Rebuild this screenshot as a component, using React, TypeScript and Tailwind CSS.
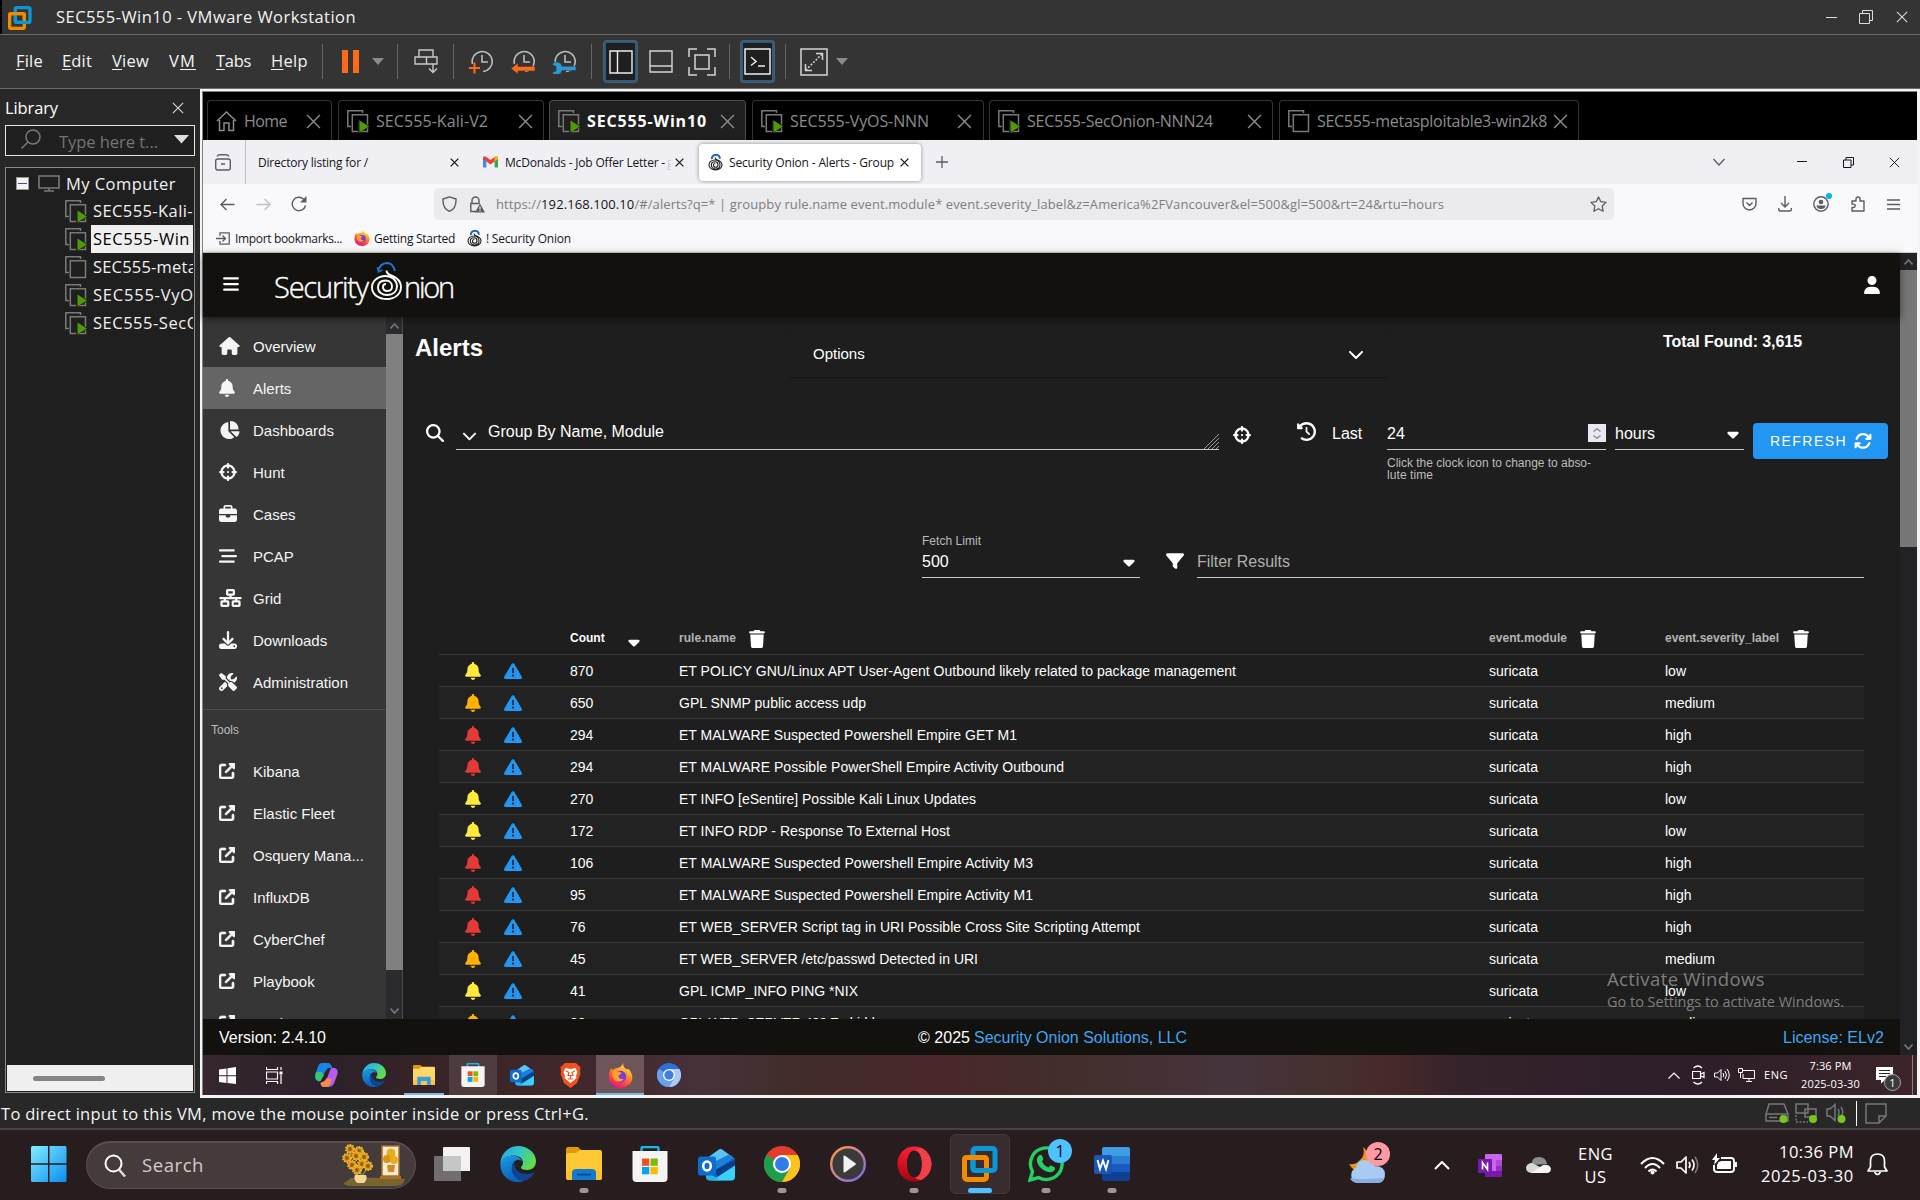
import React, { useLayoutEffect, useRef } from "react";
import {
  FaArrowsRotate, FaBars, FaBarsStaggered, FaBell, FaBriefcase, FaCaretDown, FaChartPie, FaChevronDown,
  FaClockRotateLeft, FaCrosshairs, FaDownload, FaFilter, FaHouse, FaMagnifyingGlass, FaNetworkWired,
  FaScrewdriverWrench, FaTrash, FaTriangleExclamation, FaUpRightFromSquare, FaUser,
} from "react-icons/fa6";

/* A single-line label whose letter spacing is adjusted so that it fills exactly `w` pixels. */
function Label({ w, className = "", children }: { w: number; className?: string; children: React.ReactNode }) {
  const ref = useRef<HTMLSpanElement>(null);
  useLayoutEffect(() => {
    const el = ref.current;
    if (!el) return;
    el.style.letterSpacing = "0px";
    const natural = el.getBoundingClientRect().width;
    const n = (el.textContent || "").length;
    if (n > 1) el.style.letterSpacing = `${(w - natural) / n}px`;
  }, [w]);
  return (
    <span className={"block shrink-0 whitespace-pre " + className} style={{ width: w }}>
      <span ref={ref} className="inline-block whitespace-pre">{children}</span>
    </span>
  );
}

type SvgProps = { w: number; h: number; vb?: string; className?: string; children: React.ReactNode };
function Svg({ w, h, vb, className = "", children }: SvgProps) {
  return (
    <svg width={w} height={h} viewBox={vb ?? `0 0 ${w} ${h}`} fill="none" className={"block shrink-0 " + className}>
      {children}
    </svg>
  );
}

function Cross({ s, className = "", sw = 1.2 }: { s: number; className?: string; sw?: number }) {
  return (
    <Svg w={s} h={s} vb="0 0 14 14" className={className}>
      <path d="M1 1L13 13M13 1L1 13" stroke="currentColor" strokeWidth={sw} />
    </Svg>
  );
}

/* ------------------------------------------------------------ brand icons */

function VmwareIcon({ s }: { s: number }) {
  return (
    <Svg w={s} h={s} vb="0 0 36 36">
      <rect x="11" y="2.500" width="22" height="22" rx="2.500" stroke="#0c96d6" strokeWidth="5" />
      <rect x="2.500" y="11.500" width="22" height="22" rx="2.500" stroke="#f38b00" strokeWidth="5" />
      <path d="M11 8v14q0 2.500 2.500 2.500H28" stroke="#0c96d6" strokeWidth="5" />
      <path d="M2.500 16v-2q0-2.500 2.500-2.500h17q2.500 0 2.500 2.500v6" stroke="#f38b00" strokeWidth="5" />
    </Svg>
  );
}

function EdgeIcon({ s, id, className = "" }: { s: number; id: string; className?: string }) {
  return (
    <Svg w={s} h={s} vb="0 0 36 36" className={className}>
      <defs>
        <linearGradient id={id + "a"} x1="0" y1="0" x2="1" y2="0.5">
          <stop offset="0" stopColor="#22a5e8" /><stop offset="0.5" stopColor="#2fc6c8" /><stop offset="1" stopColor="#5fdc4e" />
        </linearGradient>
        <linearGradient id={id + "b"} x1="0" y1="0" x2="0.3" y2="1">
          <stop offset="0" stopColor="#1a9be0" /><stop offset="1" stopColor="#0b63bd" />
        </linearGradient>
      </defs>
      <path d="M0.5 17C1 7 9 0 18 0c10 0 18 7 18 15 0 6-4 9-9 9-4 0-6-1-6-2.500 0-1 2-2 2-5 0-4-4-7-9-7C8 9.500 3 12 0.500 17z" fill={`url(#${id}a)`} />
      <path d="M0.500 17C2 11.500 8 9 13 9.500c5 .5 8 3 9 6-1-1-3-2-5-1.500-4 1-6 6-4.500 11 1.500 5 6 9.500 12 9.500-2 1-4.500 1.500-7 1.500C7 36-.5 27 .5 17z" fill={`url(#${id}b)`} />
      <path d="M14.500 16c-3 3-3.500 7-2 11 2 5.500 8 8.500 13 7.500 4-1.500 7-4.500 8.500-7 .5-1-.3-1.300-1-1-6 3-14 1.500-17-3.500-1.500-2.500-1.500-5-1.500-7z" fill="#0d4590" />
    </Svg>
  );
}

function FolderIcon({ s, flat = false }: { s: number; flat?: boolean }) {
  return (
    <Svg w={s} h={s * 0.92} vb="0 0 36 33">
      <path d="M0 2q0-2 2-2h10l4 4v6H0z" fill="#e09a06" />
      <path d="M0 8q0-2 2-2h8l4-3h20q2 0 2 2v26q0 2-2 2H2q-2 0-2-2z" fill={flat ? "#ffd767" : "#fcc934"} />
      <path d="M0 24h36v7q0 2-2 2H2q-2 0-2-2z" fill="#f6b928" opacity="0.6" />
      {flat ? (
        <path d="M7 33V21q0-2 2-2h18q2 0 2 2v12h-6v-7H13v7z" fill="#3c9ade" />
      ) : (
        <>
          <path d="M6 33v-7q0-4 4-4h16q4 0 4 4v7z" fill="#1279cf" />
          <path d="M11 27.500h14" stroke="#0b4f91" strokeWidth="2" />
        </>
      )}
    </Svg>
  );
}

function StoreIcon({ s }: { s: number }) {
  return (
    <Svg w={s} h={s} vb="0 0 35 36">
      <path d="M9 7V2.500q0-1.500 1.500-1.500h14q1.500 0 1.500 1.500V7" stroke="#1ab4ef" strokeWidth="2.400" />
      <path d="M0 5h35v27q0 4-4 4H4q-4 0-4-4z" fill="#f4f4f4" />
      <path d="M9.500 12.500h7.300v7.300H9.500z" fill="#f25022" />
      <path d="M18 12.500h7.300v7.300H18z" fill="#7fba00" />
      <path d="M9.500 21h7.300v7.300H9.500z" fill="#00a4ef" />
      <path d="M18 21h7.300v7.300H18z" fill="#ffb900" />
    </Svg>
  );
}

function OutlookIcon({ s }: { s: number }) {
  return (
    <Svg w={s} h={s} vb="0 0 37 36">
      <path d="M8 12L21 3q1.500-1 3 0l13 9v18q0 4-4 4H12q-4 0-4-4z" fill="#1565c0" />
      <path d="M10 11L21 3q1.500-1 3 0l11 8-17 12z" fill="#5cc3f5" />
      <path d="M15 16L31 8l4 3-17 12z" fill="#1b7fd9" />
      <path d="M16 24L37 13v6L20 31z" fill="#0a3f86" />
      <path d="M14 34L37 19v11q0 4-4 4z" fill="#39d1f7" />
      <path d="M8 24l14 10H12q-4 0-4-4z" fill="#2bb3ea" />
      <rect x="0" y="10" width="18" height="19" rx="2.500" fill="#0f6ccd" />
      <ellipse cx="9" cy="19.500" rx="3.800" ry="4.500" stroke="#fff" strokeWidth="2.600" />
    </Svg>
  );
}

function ChromeIcon({ s, mono = false }: { s: number; mono?: boolean }) {
  const c = mono ? ["#2f6fd6", "#6aa0f2", "#a9caf8"] : ["#e33b2e", "#1e9e4a", "#fcc31e"];
  return (
    <Svg w={s} h={s} vb="0 0 36 36">
      <circle cx="18" cy="18" r="18" fill={c[0]} />
      <path d="M2.400 9A18 18 0 0 0 18 36l7.800-13.500z" fill={c[1]} />
      <path d="M2.400 9L10.200 22.500 18 27 25.800 22.500z" fill={c[1]} />
      <path d="M33.600 9A18 18 0 0 1 18 36l7.800-13.500L18 9z" fill={c[2]} />
      <circle cx="18" cy="18" r="9" fill="#fff" />
      <circle cx="18" cy="18" r="7" fill={mono ? "#3f7fe0" : "#2f7de9"} />
    </Svg>
  );
}

function FirefoxIcon({ s, id }: { s: number; id: string }) {
  return (
    <Svg w={s} h={s} vb="0 0 24 24">
      <defs>
        <linearGradient id={id} x1="0.8" y1="0" x2="0.3" y2="1">
          <stop offset="0" stopColor="#fff04a" /><stop offset="0.4" stopColor="#ff9a1f" /><stop offset="0.75" stopColor="#ff3a4a" /><stop offset="1" stopColor="#e31587" />
        </linearGradient>
      </defs>
      <path d="M15 0c-1 2 0 4 2 5.500 1 0 3.500 1 3.500 1s2.500 3 2.800 6.500C24 19 18.500 24 12 24S.5 19 .7 12.800C.8 9 2 6.500 3.500 4.500c0 1 .3 1.800.8 2.300C6 5.500 7 5 8.500 5c3-.5 5-2.500 6.500-5z" fill={`url(#${id})`} />
      <circle cx="12" cy="13" r="5.600" fill="#7a3be0" />
      <path d="M4.500 8.500c2-1.500 4-1 5.500 0 1 .5 2.500.5 3 1-.5 1.500-2.500 1.500-3 3 0 2 2.500 3.500 5 2.500-1 3-7 4-9.500.5C4 13.500 3.800 10.500 4.500 8.500z" fill="#ffa32b" />
    </Svg>
  );
}

function OnionMini({ w = 15, h = 17 }: { w?: number; h?: number }) {
  return (
    <Svg w={w} h={h} vb="0 0 15 17">
      <path d="M4 5C3.500 2 6 .8 8 .8s4 1.200 3.800 4" stroke="#1f63b5" strokeWidth="2" />
      <path d="M7 3.500c0 1.500 1 2 2.500 2.500 3 1 4.500 2.500 4.500 5 0 3-3 5-6.500 5S1 14 1 11c0-3 2.500-5 6-5 3 0 5 2 5 4.700S10 15 7.500 15 3.300 13.300 3.300 11 5 7.800 7.300 7.800 10 9.300 10 11s-1 2.300-2.500 2.300S5.500 12 5.500 11s.8-1.500 1.800-1.500" stroke="#1d1d1d" strokeWidth="1.100" />
    </Svg>
  );
}

/* ------------------------------------------------------------ VMware shell */

function VmIcon({ on = true }: { on?: boolean }) {
  return (
    <Svg w={22} h={23}>
      <path d="M4 16.500H.8V.8H15.500V3" stroke="#7a7a7a" strokeWidth="1.500" />
      <path d="M5.300 4.800H20.500V21.500H5.300z" stroke="#7a7a7a" strokeWidth="1.500" />
      {on && <path d="M11 9.500L24 16.500 11 23.500z" fill="#1d1d1d" />}
      {on && <path d="M12.500 10.500L22 16.500 12.500 22.500z" fill="#4e9a06" />}
    </Svg>
  );
}

function TitleBar() {
  return (
    <div className="flex h-[34px] shrink-0 items-center border-l-2 border-black bg-[#343434] text-[#f2f2f2]">
      <div className="ml-[6px] mb-[-2px]"><VmwareIcon s={24} /></div>
      <Label w={300} className="ml-[24px] text-[16.500px] leading-[34px]">SEC555-Win10 - VMware Workstation</Label>
      <Svg w={11} h={11} className="ml-auto"><path d="M0 5.500h11" stroke="#ddd" /></Svg>
      <Svg w={14} h={14} className="ml-[22px]">
        <path d="M.5 3.500h10v10h-10zM3.500 3V.5h10v10H11" stroke="#ddd" />
      </Svg>
      <Cross s={12} className="ml-[23px] mr-[12px] text-[#ddd]" />
    </div>
  );
}

const Sep = ({ className }: { className: string }) => <div className={"h-[35px] w-px shrink-0 bg-[#666] " + className} />;

function ClockIcon({ kind }: { kind: "add" | "back" | "manage" }) {
  return (
    <Svg w={24} h={24}>
      <path d="M3.500 14A10 10 0 1 1 14 21.500" stroke="#bcbcbc" strokeWidth="1.600" />
      <path d="M13 5v7h6" stroke="#bcbcbc" strokeWidth="1.600" />
      {kind === "add" && <path d="M5.500 12.500v11M0 18h11" stroke="#ff6a1a" strokeWidth="2" />}
      {kind === "back" && <path d="M0 18.500l7-5.500v3.500h17V21H7v3z" fill="#ff6a1a" stroke="#343434" strokeWidth="0.500" />}
      {kind === "manage" && (
        <path d="M0 14.500a5.500 5.500 0 0 1 10 1.800h14v4.200H10a5.500 5.500 0 0 1-10 2l4-1.500v-4.500z" fill="#2b98d8" stroke="#343434" strokeWidth="0.500" />
      )}
    </Svg>
  );
}

function MenuBar() {
  return (
    <div className="flex h-[55px] shrink-0 items-center border-y border-[#6a6a6a] bg-[#343434] text-[16.500px] text-[#f4f4f4] underline-offset-2">
      <Label w={27} className="ml-[16px]"><u>F</u>ile</Label>
      <Label w={30} className="ml-[19px]"><u>E</u>dit</Label>
      <Label w={37} className="ml-[20px]"><u>V</u>iew</Label>
      <Label w={27} className="ml-[20px]">V<u>M</u></Label>
      <Label w={35} className="ml-[20px]"><u>T</u>abs</Label>
      <Label w={37} className="ml-[20px]"><u>H</u>elp</Label>
      <Sep className="ml-[14px]" />
      <Svg w={19} h={23} className="ml-[18px]"><path d="M1 0h6v23H1zM12 0h6v23h-6z" fill="#ff6a1a" /></Svg>
      <Svg w={12} h={7} className="ml-[12px]"><path d="M0 0h12L6 7z" fill="#8a8a8a" /></Svg>
      <Sep className="ml-[13px]" />
      <Svg w={25} h={25} className="ml-[16px]">
        <path d="M5 1h14v7H5zM1 8h11.500v7H1zM12.500 8H23v7H12.500zM19 15v8M15 19.500l4 4 4-4" stroke="#c8c8c8" strokeWidth="1.400" />
      </Svg>
      <Sep className="ml-[14px]" />
      <div className="ml-[15px]"><ClockIcon kind="add" /></div>
      <div className="ml-[18px]"><ClockIcon kind="back" /></div>
      <div className="ml-[17px]"><ClockIcon kind="manage" /></div>
      <Sep className="ml-[15px]" />
      <div className="ml-[12px] flex h-[41px] w-[33px] shrink-0 items-center justify-center rounded-[3px] border-2 border-[#2a5d86] bg-[#1f1f1f] ring-1 ring-[#5a5a5a]">
        <Svg w={24} h={24}><path d="M1 1h22v22H1zM8.500 1v22" stroke="#eee" strokeWidth="1.400" /></Svg>
      </div>
      <Svg w={24} h={23} className="ml-[12px]"><path d="M1 1h22v21H1zM1 16h22" stroke="#d4d4d4" strokeWidth="1.400" /></Svg>
      <Svg w={28} h={28} className="ml-[15px]">
        <path d="M9 1H1v8M19 1h8v8M9 27H1v-8M19 27h8v-8M7 7h14v14H7z" stroke="#d4d4d4" strokeWidth="1.500" />
      </Svg>
      <Sep className="ml-[13px]" />
      <div className="ml-[11px] flex h-[41px] w-[33px] shrink-0 items-center justify-center rounded-[3px] border-2 border-[#2a5d86] bg-[#1f1f1f] ring-1 ring-[#5a5a5a]">
        <Svg w={27} h={27}><path d="M1 1h25v25H1zM7 9l5 4.500L7 17.500M14 18h7" stroke="#eee" strokeWidth="1.500" /></Svg>
      </div>
      <Sep className="ml-[11px]" />
      <Svg w={28} h={28} className="ml-[14px]">
        <path d="M1 1h26v26H1z" stroke="#d4d4d4" strokeWidth="1.500" />
        <path d="M16 5.500h6.500V12M5.500 16v6.500H12" stroke="#d4d4d4" strokeWidth="1.500" />
        <path d="M22 6L6 22" stroke="#d4d4d4" strokeWidth="1.500" strokeDasharray="2 1.500" />
      </Svg>
      <Svg w={12} h={7} className="ml-[8px]"><path d="M0 0h12L6 7z" fill="#8a8a8a" /></Svg>
    </div>
  );
}

const library = [
  { name: "SEC555-Kali-", w: 100, on: true, sel: false },
  { name: "SEC555-Win", w: 97, on: true, sel: true },
  { name: "SEC555-meta", w: 104, on: false, sel: false },
  { name: "SEC555-VyO", w: 101, on: true, sel: false },
  { name: "SEC555-SecO", w: 107, on: true, sel: false },
];

function Library() {
  return (
    <div className="flex w-[200px] shrink-0 flex-col bg-[#282828] text-[16.500px]">
      <div className="flex h-[36px] items-center pt-[2px] text-white">
        <Label w={53} className="ml-[5px]">Library</Label>
        <Cross s={12} className="ml-[114px] text-[#e0e0e0]" />
      </div>
      <div className="ml-[5px] flex h-[31px] w-[190px] shrink-0 items-center border-[1.500px] border-[#e6e6e6] bg-[#202020]">
        <Svg w={20} h={20} className="ml-[15px] mb-[3px]">
          <circle cx="12" cy="8" r="7" stroke="#7a7a7a" strokeWidth="1.500" /><path d="M7 13l-6.500 6.500" stroke="#7a7a7a" strokeWidth="1.500" />
        </Svg>
        <Label w={99} className="ml-[18px] mt-[3px] text-[#757575]">Type here t...</Label>
        <Svg w={15} h={9} className="ml-[16px] mb-[2px]"><path d="M0 0h15L7.500 8.500z" fill="#ddd" /></Svg>
      </div>
      <div className="mt-[11px] ml-[5px] flex h-[926px] w-[190px] shrink-0 flex-col border border-[#8a8a8a] bg-[#1f1f1f] p-px text-[#f2f2f2]">
        <div className="flex h-[28px] items-center">
          <div className="mt-px ml-[9px] flex h-[13px] w-[13px] items-center justify-center border border-[#999] bg-[#f4f4f4]">
            <div className="h-px w-[9px] bg-[#39538f]" />
          </div>
          <Svg w={22} h={17} className="mt-px ml-[9px]">
            <path d="M1 1h20v12H1zM11 13v3M6 16h10" stroke="#7a7a7a" strokeWidth="1.600" />
          </Svg>
          <Label w={110} className="ml-[6px] pt-[3px]">My Computer</Label>
        </div>
        {library.map((v) => (
          <div key={v.name} className="flex h-[28px] items-center overflow-hidden">
            <div className="ml-[58px] mr-[4px] shrink-0"><VmIcon on={v.on} /></div>
            <div className={v.sel ? "h-[28px] flex-1 overflow-hidden bg-[#f0f0f0] pl-[2px] leading-[28px] text-black" : "h-[28px] flex-1 overflow-hidden pl-[2px] leading-[28px]"}>
              <Label w={v.w}>{v.name}</Label>
            </div>
          </div>
        ))}
        <div className="mt-auto flex h-[26px] items-center bg-[#f0f0f0] pl-[26px]">
          <div className="h-[5px] w-[72px] rounded-full bg-[#858585]" />
        </div>
      </div>
    </div>
  );
}

type VmTab = { name: string; w: number; tab: string; x: string; home?: boolean; active?: boolean; on?: boolean };
const vmTabs: VmTab[] = [
  { name: "Home", w: 43, tab: "w-[125px] ml-[4px]", x: "mr-[10px]", home: true },
  { name: "SEC555-Kali-V2", w: 112, tab: "w-[206px] ml-[6px]", x: "mr-[10px]", on: true },
  { name: "SEC555-Win10", w: 120, tab: "w-[197px] ml-[5px]", x: "mr-[10px]", active: true, on: true },
  { name: "SEC555-VyOS-NNN", w: 139, tab: "w-[232px] ml-[6px]", x: "mr-[11px]", on: true },
  { name: "SEC555-SecOnion-NNN24", w: 186, tab: "w-[284px] ml-[5px]", x: "mr-[10px]", on: true },
  { name: "SEC555-metasploitable3-win2k8", w: 230, tab: "w-[300px] ml-[6px]", x: "mr-[10px]", on: false },
];

function VmTabs() {
  return (
    <div className="flex h-[48px] shrink-0 items-end bg-black text-[16px]">
      {vmTabs.map((t) => (
        <div
          key={t.name}
          className={`flex h-[40px] shrink-0 items-center rounded-t-[4px] border border-b-0 pt-px ${t.tab} ${t.active ? "border-[#4a4a4a] bg-[#1f1f1f] font-bold text-white" : "border-[#333] text-[#8c8c8c]"}`}
        >
          <div className="mr-[7px] ml-[8px] shrink-0">
            {t.home ? (
              <Svg w={21} h={21}><path d="M1 10L10.500 1 20 10M3.500 9v10.500H8V12h5v7.500h4.500V9" stroke="#8c8c8c" strokeWidth="1.500" /></Svg>
            ) : <VmIcon on={t.on} />}
          </div>
          <Label w={t.w}>{t.name}</Label>
          <Cross s={15} className={"ml-auto text-[#8c8c8c] " + t.x} sw={1.300} />
        </div>
      ))}
    </div>
  );
}

/* ------------------------------------------------------------ Firefox chrome */

function FirefoxTabs() {
  return (
    <div className="flex h-[44px] shrink-0 items-center bg-[#f0f0f4] text-[12px] text-[#15141a]">
      <Svg w={16} h={17} className="ml-[12px]">
        <rect x="0.700" y="5" width="14.600" height="11" rx="2" stroke="#5b5b66" strokeWidth="1.400" />
        <path d="M2 2.500Q3 .7 5 .7h6q2 0 3 1.800M6 10h4" stroke="#5b5b66" strokeWidth="1.400" />
      </Svg>
      <div className="ml-[14px] h-full w-px bg-[#bcbcc4]" />
      <Label w={110} className="ml-[12px] pt-[2px]">Directory listing for /</Label>
      <Cross s={9} className="ml-[82px]" sw={2} />
      <Svg w={15} h={12} vb="0 0 15 12" className="ml-[24px]">
        <path d="M0 2v9.500h3.400V5z" fill="#4285f4" /><path d="M15 2v9.500h-3.400V5z" fill="#34a853" />
        <path d="M0 1.500Q1-.5 3 .7L7.500 4 12 .7q2-1.200 3 .8v1.500L7.500 8.500 0 3z" fill="#ea4335" />
        <path d="M15 3V1.500q-1-2-3-.8l-.4.300v4.500z" fill="#fbbc04" />
      </Svg>
      <Label w={160} className="ml-[7px] pt-[2px]">McDonalds - Job Offer Letter -</Label>
      <span className="ml-[2px] w-[4px] overflow-hidden pt-[2px] text-[#ccc]">g</span>
      <Cross s={9} className="ml-[4px]" sw={2} />
      <div className="ml-[15px] flex h-[37px] w-[222px] shrink-0 items-center rounded-[4px] bg-white shadow-[0_0_4px_rgba(0,0,0,0.4)]">
        <div className="ml-[9px]"><OnionMini /></div>
        <Label w={165} className="ml-[6px] pt-[2px]">Security Onion - Alerts - Group</Label>
        <Cross s={9} className="ml-[6px]" sw={2} />
      </div>
      <Svg w={12} h={12} className="ml-[15px]"><path d="M6 0v12M0 6h12" stroke="#5b5b66" strokeWidth="1.300" /></Svg>
      <Svg w={12} h={8} className="ml-auto"><path d="M.5 1L6 7l5.500-6" stroke="#5b5b66" strokeWidth="1.300" /></Svg>
      <Svg w={10} h={10} className="ml-[72px]"><path d="M0 4.500h10" stroke="#15141a" /></Svg>
      <Svg w={11} h={11} className="ml-[36px]"><path d="M.5 3h7.500v7.500H.5zM3 3V.5h7.500V8H8" stroke="#15141a" /></Svg>
      <Cross s={11} className="mr-[17px] ml-[35px]" />
    </div>
  );
}

function FirefoxToolbar() {
  return (
    <div className="flex h-[40px] shrink-0 items-center bg-[#f9f9fb] text-[#5b5b66]">
      <Svg w={15} h={13} className="ml-[17px]"><path d="M14.500 6.500H1M6.500 1L1 6.500 6.500 12" stroke="currentColor" strokeWidth="1.400" /></Svg>
      <Svg w={15} h={13} className="ml-[21px]"><path d="M.5 6.500H14M8.500 1L14 6.500 8.500 12" stroke="#c0c0c6" strokeWidth="1.400" /></Svg>
      <Svg w={16} h={16} className="ml-[20px]">
        <path d="M14.500 9.500A6.700 6.700 0 1 1 12.500 3l2 2" stroke="currentColor" strokeWidth="1.400" /><path d="M15.500 0v6.500H9z" fill="currentColor" />
      </Svg>
      <div className="ml-[127px] flex h-[32px] w-[1180px] shrink-0 items-center rounded-[4px] bg-[#ebebed]">
        <Svg w={15} h={16} className="ml-[8px]">
          <path d="M7.500.8L14 3c.3 6-2 10.500-6.500 12.300C3 13.500.7 9 1 3z" stroke="currentColor" strokeWidth="1.400" strokeLinejoin="round" />
        </Svg>
        <Svg w={16} h={17} className="ml-[12px]">
          <path d="M3 7V4.500a3.500 3.500 0 0 1 7 0V7M7 15.500H1.800V7.500h9" stroke="currentColor" strokeWidth="1.400" />
          <path d="M11 7.500L16 16.500H6z" fill="currentColor" /><path d="M11 10.500v3M11 14.300v1.200" stroke="#ebebed" strokeWidth="1.200" />
        </Svg>
        <Label w={948} className="ml-[11px] pt-[2px] text-[13px] text-[#7d7d84]">
          https://<span className="text-[#15141a]">192.168.100.10</span>/#/alerts?q=* | groupby rule.name event.module* event.severity_label&amp;z=America%2FVancouver&amp;el=500&amp;gl=500&amp;rt=24&amp;rtu=hours
        </Label>
        <Svg w={17} h={16} className="ml-[146px]">
          <path d="M8.500 1l2.300 4.700 5.200.7-3.800 3.600.9 5.200-4.600-2.500L3.900 15.200l.9-5.200L1 6.400l5.200-.7z" stroke="currentColor" strokeWidth="1.300" strokeLinejoin="round" />
        </Svg>
      </div>
      <Svg w={15} h={14} className="ml-[128px]">
        <path d="M1 1.500h13v5a6.500 6.500 0 0 1-13 0zM4.500 5.500l3 3 3-3" stroke="currentColor" strokeWidth="1.400" strokeLinejoin="round" />
      </Svg>
      <Svg w={14} h={16} className="ml-[21px]"><path d="M7 0v11M3 7l4 4 4-4M.7 12v1.500q0 1.500 1.500 1.500h9.600q1.500 0 1.500-1.500V12" stroke="currentColor" strokeWidth="1.400" /></Svg>
      <div className="relative ml-[21px]">
        <Svg w={16} h={16}>
          <circle cx="8" cy="8" r="7.200" stroke="currentColor" strokeWidth="1.400" /><circle cx="8" cy="6" r="2.300" fill="currentColor" /><path d="M3.500 9.500h9Q12 13 8 13t-4.500-3.500z" fill="currentColor" />
        </Svg>
        <div className="absolute -top-[3px] -right-[3px] h-[6px] w-[6px] rounded-full bg-[#00b3f4]" />
      </div>
      <Svg w={14} h={16} className="ml-[22px]">
        <path d="M1 5h4V3a2 2 0 0 1 4 0v2h4v10H1v-3.500h1.500a1.700 1.700 0 0 0 0-3.400H1z" stroke="currentColor" strokeWidth="1.400" strokeLinejoin="round" />
      </Svg>
      <Svg w={13} h={11} className="ml-[22px]"><path d="M0 1h13M0 5.500h13M0 10h13" stroke="currentColor" strokeWidth="1.400" /></Svg>
    </div>
  );
}

function Bookmarks() {
  return (
    <div className="flex h-[29px] shrink-0 items-center border-b border-[#ccc] bg-[#f9f9fb] text-[12px] text-[#15141a]">
      <Svg w={14} h={13} className="ml-[13px]">
        <path d="M4 4V.8h9.200v11.400H4V9M0 6.500h9M6.500 3.500l3 3-3 3" stroke="#5b5b66" strokeWidth="1.300" />
      </Svg>
      <Label w={107} className="ml-[5px] pt-[2px]">Import bookmarks...</Label>
      <div className="ml-[12px]"><FirefoxIcon s={16} id="ffs" /></div>
      <Label w={81} className="ml-[4px] pt-[2px]">Getting Started</Label>
      <div className="ml-[12px]"><OnionMini /></div>
      <Label w={85} className="ml-[4px] pt-[2px]">! Security Onion</Label>
    </div>
  );
}

/* ------------------------------------------------------------ Security Onion */

function AppHeader() {
  return (
    <div className="flex h-[64px] shrink-0 items-center bg-[#12110d] text-white shadow-[0_2px_8px_rgba(0,0,0,0.5)]">
      <FaBars className="mt-[-2px] ml-[20px] h-[18px] w-[16px]" />
      <div className="ml-[35px] flex h-[64px] items-center">
        <Label w={94} className="mt-[3px] text-[29px] leading-[40px] font-light [-webkit-text-stroke:0.4px_white]">Security</Label>
        <Svg w={34} h={42} className="ml-[2px] mb-[6px]">
          <path d="M8.500 9.500Q10 2.500 17 2q6 0 8 8" stroke="#1f74cf" strokeWidth="2" />
          <path d="M7.500 6l1 5 4-2" stroke="#1f74cf" strokeWidth="1.500" />
          <path d="M16.500 9.500c0 3 2 4 6 5.500 6 2.500 8.500 6 8.500 11 0 7-6 12-14 12C8 38 2 33 2 26.500 2 20 8 15 15.500 15c7 0 11.500 4.500 11.500 10.500 0 5-4 8.500-9.500 8.500S8 31 8 26.500C8 22 11 19.500 15.500 19.500s6.500 3 6.500 6-2 4.500-4.500 4.500-4.500-1.500-4.500-4 1.500-3 3-3" stroke="#fff" strokeWidth="1.900" />
        </Svg>
        <Label w={49} className="mt-[3px] text-[29px] leading-[40px] font-light [-webkit-text-stroke:0.4px_white]">nion</Label>
      </div>
      <FaUser className="mr-[20px] ml-auto h-[18px] w-[16px]" />
    </div>
  );
}

const nav = [
  { t: "Overview", I: FaHouse, c: "h-[18px] w-[21px]" },
  { t: "Alerts", I: FaBell, c: "h-[18px] w-[16px]" },
  { t: "Dashboards", I: FaChartPie, c: "h-[18px] w-[21px]" },
  { t: "Hunt", I: FaCrosshairs, c: "h-[18px] w-[18px]" },
  { t: "Cases", I: FaBriefcase, c: "h-[18px] w-[18px]" },
  { t: "PCAP", I: FaBarsStaggered, c: "h-[18px] w-[18px]" },
  { t: "Grid", I: FaNetworkWired, c: "h-[18px] w-[23px]" },
  { t: "Downloads", I: FaDownload, c: "h-[18px] w-[18px]" },
  { t: "Administration", I: FaScrewdriverWrench, c: "h-[18px] w-[18px]" },
];
const tools = ["Kibana", "Elastic Fleet", "Osquery Mana...", "InfluxDB", "CyberChef", "Playbook", "Navigator"];

function NavItem({ text, Icon, icon, active }: { text: string; Icon: React.ComponentType<{ className?: string }>; icon: string; active?: boolean }) {
  return (
    <div className={`flex h-[42px] shrink-0 items-center pl-[16px] ${active ? "bg-[#656565]" : ""}`}>
      <div className="w-[34px]"><Icon className={icon} /></div>
      <span className="text-[15px] leading-none">{text}</span>
    </div>
  );
}

function SideNav() {
  return (
    <div className="flex h-[702px] w-[200px] shrink-0 overflow-hidden">
      <div className="flex w-[183px] flex-col overflow-hidden bg-[#363636] pt-[8px] text-[#f5f5f5]">
        {nav.map((n) => <NavItem key={n.t} text={n.t} Icon={n.I} icon={n.c} active={n.t === "Alerts"} />)}
        <div className="mt-[6px] h-px shrink-0 bg-[#4c4c4c]" />
        <div className="flex h-[40px] shrink-0 items-center pl-[8px] text-[12px] text-[#bdbdbd]">Tools</div>
        {tools.map((t) => <NavItem key={t} text={t} Icon={FaUpRightFromSquare} icon="h-[16px] w-[16px] stroke-current [stroke-width:22]" />)}
      </div>
      <div className="flex w-[17px] flex-col border-r border-[#4c4c4c] bg-[#2b2b2e] text-[#777]">
        <div className="flex h-[17px] items-center justify-center"><Svg w={9} h={6}><path d="M.5 5.500l4-4.500 4 4.500" stroke="currentColor" strokeWidth="1.600" /></Svg></div>
        <div className="h-[636px] w-[17px] bg-[#808080]" />
        <div className="mt-auto flex h-[17px] items-center justify-center"><Svg w={9} h={6}><path d="M.5.500l4 4.500 4-4.500" stroke="currentColor" strokeWidth="1.600" /></Svg></div>
      </div>
    </div>
  );
}

type Sev = "low" | "medium" | "high";
const alerts: [number, string, Sev, number][] = [
  [870, "ET POLICY GNU/Linux APT User-Agent Outbound likely related to package management", "low", 557],
  [650, "GPL SNMP public access udp", "medium", 187],
  [294, "ET MALWARE Suspected Powershell Empire GET M1", "high", 338],
  [294, "ET MALWARE Possible PowerShell Empire Activity Outbound", "high", 385],
  [270, "ET INFO [eSentire] Possible Kali Linux Updates", "low", 297],
  [172, "ET INFO RDP - Response To External Host", "low", 271],
  [106, "ET MALWARE Suspected Powershell Empire Activity M3", "high", 354],
  [95, "ET MALWARE Suspected Powershell Empire Activity M1", "high", 354],
  [76, "ET WEB_SERVER Script tag in URI Possible Cross Site Scripting Attempt", "high", 461],
  [45, "ET WEB_SERVER /etc/passwd Detected in URI", "medium", 299],
  [41, "GPL ICMP_INFO PING *NIX", "low", 179],
  [32, "GPL WEB_SERVER 403 Forbidden", "medium", 210],
];
const bell: Record<Sev, string> = { low: "text-[#ffeb3b]", medium: "text-[#ffb300]", high: "text-[#e53935]" };
const cols = "grid grid-cols-[131px_109px_810px_176px_1fr]";

function Table() {
  return (
    <div className="mt-[37px] ml-[36px] w-[1425px]">
      <div className={`${cols} h-[40px] items-center border-b border-[#3a3a3a] pt-[8px] text-[12px] font-bold text-[#b4b4b4]`}>
        <span />
        <div className="flex items-center">
          <span className="mb-px w-[58px] text-white">Count</span>
          <FaCaretDown className="mt-[7px] h-[18px] w-[12px] text-white" />
        </div>
        <div className="flex items-center"><Label w={57} className="mr-[13px] mb-[2px]">rule.name</Label><FaTrash className="h-[18px] w-[16px] text-white" /></div>
        <div className="flex items-center"><Label w={78} className="mr-[13px] mb-[2px]">event.module</Label><FaTrash className="h-[18px] w-[16px] text-white" /></div>
        <div className="flex items-center"><Label w={114} className="mr-[14px] mb-[2px]">event.severity_label</Label><FaTrash className="h-[18px] w-[16px] text-white" /></div>
      </div>
      {alerts.map(([n, name, sev, w], i) => (
        <div key={i} className={`${cols} h-[32px] items-center border-b border-[#3a3a3a] text-[14px] text-white ${i % 2 ? "bg-[#222222]" : ""}`}>
          <div className="flex items-center">
            <FaBell className={"ml-[26px] h-[18px] w-[16px] " + bell[sev]} />
            <FaTriangleExclamation className="ml-[23px] h-[18px] w-[18px] text-[#2196f3]" />
          </div>
          <span className="pt-[2px]">{n}</span>
          <Label w={w} className="pt-[2px]">{name}</Label>
          <span className="pt-[2px]">suricata</span>
          <span className="pt-[2px]">{sev}</span>
        </div>
      ))}
    </div>
  );
}

function AlertsPage() {
  return (
    <div className="relative flex h-[702px] w-[1497px] flex-col overflow-hidden bg-[#1e1e1e] text-white">
      <div className="flex h-[60px] shrink-0 items-start">
        <h1 className="mt-[17px] ml-[12px] w-[374px] text-[24px] leading-[28px] font-bold">Alerts</h1>
        <div className="mt-[13px] flex h-[47px] w-[600px] items-center rounded-[4px] px-[24px] shadow-[0_2px_2px_-1px_rgba(0,0,0,0.35)]">
          <span className="pt-[2px] text-[15px]">Options</span>
          <FaChevronDown className="mt-px mr-px ml-auto h-[18px] w-[16px]" />
        </div>
        <Label w={139} className="mt-[15px] ml-[274px] text-[16px] leading-[20px] font-bold">Total Found: 3,615</Label>
      </div>
      <div className="flex h-[105px] shrink-0 items-start pt-[42px] text-[16px] leading-[24px]">
        <FaMagnifyingGlass className="mt-[5px] ml-[23px] h-[18px] w-[18px]" />
        <div className="ml-[12px] flex h-[31px] w-[763px] border-b border-[#c8c8c8]">
          <FaChevronDown className="mt-[8px] ml-[6px] h-[17px] w-[15px]" />
          <Label w={176} className="mt-px ml-[11px]">Group By Name, Module</Label>
          <Svg w={15} h={15} className="mt-auto ml-auto"><path d="M0 15L15 0M4 15L15 4M8 15l7-7M12 15l3-3" stroke="#999" /></Svg>
        </div>
        <FaCrosshairs className="mt-[7px] ml-[14px] h-[18px] w-[18px]" />
        <FaClockRotateLeft className="mt-[3px] ml-[46px] h-[19px] w-[19px]" />
        <span className="mt-[3px] ml-[16px] w-[55px]">Last</span>
        <div className="w-[219px]">
          <div className="flex h-[31px] items-start border-b border-[#c8c8c8] pt-[3px]">
            <span>24</span>
            <div className="mt-[2px] ml-auto flex h-[18px] w-[18px] flex-col items-center justify-center gap-[3px] bg-[#e9e9ed] text-[#8f8f9d]">
              <Svg w={8} h={4}><path d="M.5 3.500L4 .7l3.500 2.800" stroke="currentColor" strokeWidth="1.400" /></Svg>
              <Svg w={8} h={4}><path d="M.5.500L4 3.300 7.500.5" stroke="currentColor" strokeWidth="1.400" /></Svg>
            </div>
          </div>
          <div className="mt-[7px] text-[12px] leading-[12px] text-[#bcbcbc]">
            <Label w={204}>Click the clock icon to change to abso-</Label>
            <Label w={46}>lute time</Label>
          </div>
        </div>
        <div className="ml-[9px] flex h-[31px] w-[129px] items-start border-b border-[#c8c8c8] pt-[3px]">
          <Label w={40}>hours</Label>
          <FaCaretDown className="mt-[3px] mr-[5px] ml-auto h-[18px] w-[12px]" />
        </div>
        <div className="mt-[4px] ml-[9px] flex h-[36px] w-[135px] items-center rounded-[4px] bg-[#2196f3] shadow">
          <Label w={77} className="ml-[17px] text-[14px]">REFRESH</Label>
          <FaArrowsRotate className="ml-[7px] h-[18px] w-[18px]" />
        </div>
      </div>
      <div className="flex h-[96px] shrink-0 items-end text-[16px] leading-[24px]">
        <div className="ml-[519px] w-[218px] border-b border-[#c8c8c8]">
          <Label w={59} className="text-[12px] leading-[16px] text-[#bcbcbc]">Fetch Limit</Label>
          <div className="flex h-[28px] items-start">
            <span className="mt-px">500</span>
            <FaCaretDown className="mt-[4px] mr-[5px] ml-auto h-[18px] w-[12px]" />
          </div>
        </div>
        <FaFilter className="mb-[8px] ml-[26px] h-[18px] w-[18px]" />
        <div className="ml-[13px] h-[28px] w-[667px] border-b border-[#c8c8c8] text-[#b0b0b0]"><Label w={93}>Filter Results</Label></div>
      </div>
      <Table />
      <div className="absolute top-[648px] left-[1204px] font-['Open_Sans',sans-serif] text-[#8a8a8a] opacity-90">
        <Label w={158} className="text-[18.500px] leading-[28px]">Activate Windows</Label>
        <Label w={237} className="text-[14.500px] leading-[18px]">Go to Settings to activate Windows.</Label>
      </div>
    </div>
  );
}

function Page() {
  return (
    <div className="flex h-[802px] shrink-0 font-['Liberation_Sans',Arial,sans-serif]">
      <div className="flex w-[1697px] flex-col">
        <div className="z-10 font-['Open_Sans',sans-serif]"><AppHeader /></div>
        <div className="flex"><SideNav /><AlertsPage /></div>
        <div className="grid h-[36px] shrink-0 grid-cols-[699px_1fr_auto] items-center bg-[#12110d] px-[16px] pt-[2px] text-[16px] text-white">
          <Label w={107}>Version: 2.4.10</Label>
          <div className="flex">
            <Label w={52} className="mr-[4px]">© 2025</Label>
            <Label w={213} className="text-[#42a5f5]">Security Onion Solutions, LLC</Label>
          </div>
          <Label w={101} className="text-[#42a5f5]">License: ELv2</Label>
        </div>
      </div>
      <div className="flex w-[17px] flex-col bg-[#222226] text-[#777]">
        <div className="flex h-[17px] items-center justify-center"><Svg w={9} h={6}><path d="M.5 5.500l4-4.500 4 4.500" stroke="currentColor" strokeWidth="1.600" /></Svg></div>
        <div className="h-[277px] bg-[#777]" />
        <div className="mt-auto flex h-[17px] items-center justify-center"><Svg w={9} h={6}><path d="M.5.500l4 4.500 4-4.500" stroke="currentColor" strokeWidth="1.600" /></Svg></div>
      </div>
    </div>
  );
}

/* ------------------------------------------------------------ guest taskbar */

function GuestTaskbar() {
  const cell = "flex h-full w-[48px] shrink-0 items-center justify-center";
  return (
    <div className="flex h-[40px] shrink-0 items-center bg-[linear-gradient(90deg,#35262f_0%,#2d2129_8%,#3a2528_15%,#42282c_24%,#47323a_29%,#412c2a_35%,#4a272a_43%,#432e2b_50%,#45343c_60%,#45302e_66%,#47292a_69%,#34222c_74%,#2d1e29_88%,#3d252a_100%)] text-white">
      <div className={cell}>
        <Svg w={17} h={17}><path d="M0 2.400l7.500-1v6.800H0zM8.500 1.200L17 0v8.200H8.500zM0 9.200h7.500V16L0 15zM8.500 9.200H17V17l-8.500-1.100z" fill="#fff" /></Svg>
      </div>
      <div className={cell}>
        <Svg w={18} h={17}><path d="M.5 0v2.500h11V0M.5 17v-2.500h11V17M.5 5h11v7H.5zM15 0v3M15 8v9" stroke="#fff" strokeWidth="1.200" /><path d="M13.500 4.500h3v3h-3z" fill="#fff" /></Svg>
      </div>
      <div className={cell + " ml-[3px]"}>
        <Svg w={23} h={24} vb="0 0 23 24">
          <path d="M7 0h6q3 0 4 5h-4l-3 4-4 8q-1 2-3 1-4-2-3-6L3 4q1-4 4-4z" fill="#1686e8" />
          <path d="M1 9l5 0 3 3-3 5q-1 2-3 1-4-2-2-9z" fill="#3cc46a" />
          <path d="M12 24H9q-3 0-3.500-4l4-2 3-4 3-8q1-2 4-1 4 1 3 6l-3 8q-1 5-7.500 5z" fill="#b65cf0" />
          <path d="M12 24H9q-3 0-3.500-4l4-2 3-3 4 1q-1 8-4.500 8z" fill="#f58a4a" />
        </Svg>
      </div>
      <div className={cell}><EdgeIcon s={24} id="ge" /></div>
      <div className={cell + " relative ml-[2px]"}>
        <FolderIcon s={22} flat />
        <div className="absolute bottom-0 left-[4px] h-[2px] w-[40px] bg-[#76b9ed]" />
      </div>
      <div className={cell + " ml-px bg-white/10"}><StoreIcon s={24} /></div>
      <div className={cell + " ml-px"}><OutlookIcon s={24} /></div>
      <div className={cell}>
        <Svg w={21} h={25}>
          <path d="M5 0h11l2 2 2.500 2-.5 5 .5 2L17 20l-6.500 5L4 20 .5 11 1 9 .5 4 3 2z" fill="#f3501f" />
          <path d="M5.500 5l5 1 5-1 2 4-1.500 4 .5 2-3 2.500-3 2.500-3-2.500L4.500 15l.5-2L3.500 9z" fill="#fff" />
          <path d="M6 8l3 1.500-1 3h5l-1-3L15 8M10.500 12v4M8 16h5" stroke="#f3501f" strokeWidth="1.200" />
        </Svg>
      </div>
      <div className={cell + " relative ml-[2px] bg-[#6d555a]"}>
        <FirefoxIcon s={25} id="ffg" />
        <div className="absolute bottom-0 left-0 h-[2px] w-full bg-[#76b9ed]" />
      </div>
      <div className={cell + " ml-px"}><ChromeIcon s={24} mono /></div>
      <div className="ml-auto flex h-full items-center text-[11px]">
        <Svg w={12} h={7}><path d="M.5 6.500L6 1l5.500 5.500" stroke="#fff" strokeWidth="1.200" /></Svg>
        <Svg w={13} h={20} className="ml-[12px]"><path d="M.5 6.500h8v7h-8zM9 9l3-1.500v5L9 11M1.500 3Q6-1 10 3M1.500 17q4.500 4 8.500 0" stroke="#fff" strokeWidth="1.200" /></Svg>
        <Svg w={17} h={14} className="ml-[9px]"><path d="M.5 5h3L7 1.500v11L3.500 9h-3zM9 5q1.500 2 0 4M11 3q3 4 0 8M13 1q4.500 6 0 12" stroke="#fff" /></Svg>
        <Svg w={17} h={14} className="ml-[7px]"><path d="M5 2.500h11.500v8H5V6M8 13.500h6M11 11v2.500M.5.500h4v4h-4zM2.500 5v5" stroke="#fff" /></Svg>
        <Label w={24} className="ml-[9px]">ENG</Label>
        <div className="ml-[13px] flex w-[59px] flex-col items-center leading-[18px]">
          <Label w={42}>7:36 PM</Label><Label w={59}>2025-03-30</Label>
        </div>
        <div className="relative ml-[16px]">
          <Svg w={17} h={17}><path d="M0 0h17v13H9l-4 3.500V13H0z" fill="#fff" /><path d="M3 3.500h11M3 6.500h11M3 9.500h7" stroke="#33222a" /></Svg>
          <div className="absolute top-[7px] left-[8px] flex h-[17px] w-[17px] items-center justify-center rounded-full border border-[#aaa] bg-[#3a3a3a] text-[11px] leading-none">1</div>
        </div>
        <div className="mr-[4px] ml-[19px] h-[40px] w-px bg-[#8a7a80]" />
      </div>
    </div>
  );
}

function StatusBar() {
  return (
    <div className="flex h-[32px] shrink-0 items-center border-b-2 border-[#474243] bg-[#282828] text-[16.500px] text-[#f4f4f4]">
      <Label w={588} className="ml-px pt-[3px]">To direct input to this VM, move the mouse pointer inside or press Ctrl+G.</Label>
      <Svg w={24} h={20} className="ml-auto">
        <path d="M4 1h15l4 10v7H1v-7zM1 11h22M4 14.500h8" stroke="#777" strokeWidth="1.500" /><circle cx="18.500" cy="16" r="4" fill="#7bc61e" />
      </Svg>
      <Svg w={23} h={20} className="ml-[6px]">
        <path d="M1 1h12v9H1zM10 6h11v8H10z" stroke="#777" strokeWidth="1.500" /><path d="M1 12v7h12" stroke="#777" strokeWidth="1.500" strokeDasharray="2 1.500" /><circle cx="18" cy="16" r="4" fill="#7bc61e" />
      </Svg>
      <Svg w={21} h={20} className="ml-[8px]">
        <path d="M1 6h3l5-4.500v16L4 13H1zM12 6q2 3 0 7M15 4q3.500 5 0 10" stroke="#777" strokeWidth="1.500" /><circle cx="15.500" cy="16" r="4" fill="#7bc61e" />
      </Svg>
      <div className="ml-[9px] h-[25px] w-[1.500px] bg-white" />
      <Svg w={22} h={21} className="mr-[33px] ml-[8px]"><path d="M1 1h20v12l-7 7H1zM21 13h-7v7" stroke="#777" strokeWidth="1.500" /></Svg>
    </div>
  );
}

/* ------------------------------------------------------------ host taskbar */

function TaskItem({ ind, active, badge, children }: { ind?: boolean; active?: boolean; badge?: React.ReactNode; children: React.ReactNode }) {
  return (
    <div className="relative flex h-[70px] w-[66px] shrink-0 items-center justify-center">
      <div className={active ? "flex h-[60px] w-[60px] -translate-y-px items-center justify-center rounded-[6px] border border-[#443a3c] bg-[#372c2e]" : "flex -translate-y-px items-center justify-center"}>
        {children}
      </div>
      {ind && <div className={`absolute bottom-[7px] left-1/2 h-[5px] -translate-x-1/2 rounded-full ${active ? "w-[24px] bg-[#4cc2ff]" : "w-[9px] bg-[#9d9596]"}`} />}
      {badge}
    </div>
  );
}

function Sunflowers() {
  const heads = [[5, 6], [14, 8], [2, 15], [11, 13], [19, 14], [7, 22], [17, 21], [23, 23], [12, 27]];
  return (
    <Svg w={66} h={44} className="ml-auto">
      <path d="M2 41l8-6q24-1 54 1-1 7-10 7H12q-6 0-10-2z" fill="#77672e" />
      <path d="M7 12l9 22M18 12l2 22M26 26l-6 8" stroke="#7f8a2c" strokeWidth="1.500" />
      {heads.map(([x, y], i) => (
        <g key={i}>
          <circle cx={x + 4} cy={y} r="4.200" fill="#dd9d17" stroke="#f2bd35" strokeWidth="1.600" strokeDasharray="1.500 1.200" />
          <circle cx={x + 4} cy={y} r="1.900" fill="#94590f" />
        </g>
      ))}
      <path d="M14 32h11q2 4-2 8h-7q-4-4-2-8z" fill="#f2d79a" />
      <path d="M43 36l-3 6M57 36l3 6" stroke="#8a5a22" strokeWidth="2" />
      <path d="M41 3h17v30H41z" fill="#f6ecd0" stroke="#a8702b" strokeWidth="1.500" />
      <circle cx="50" cy="10" r="4.500" fill="#e9ab1b" /><circle cx="46" cy="16" r="4" fill="#d89312" /><circle cx="53" cy="17" r="4" fill="#e9ab1b" />
      <path d="M46 22h8l-1 7h-6z" fill="#d08a2b" />
      <path d="M39 33h21v3H39z" fill="#a8702b" />
    </Svg>
  );
}

function HostTaskbar() {
  return (
    <div className="flex h-[70px] shrink-0 items-center bg-[#281d1e] text-white">
      <Svg w={36} h={36} className="ml-[31px] mb-[2px]">
        <defs><linearGradient id="win" x1="0" y1="0" x2="1" y2="1"><stop offset="0" stopColor="#7eeeff" /><stop offset="1" stopColor="#0c8cf0" /></linearGradient></defs>
        <path d="M1.500 0H17v17.200H0V1.500Q0 0 1.500 0zM18.500 0H34q1.500 0 1.500 1.500v15.700h-17zM0 18.700h17V36H1.500Q0 36 0 34.500zM18.500 18.700h17v15.800q0 1.500-1.500 1.500H18.500z" fill="url(#win)" />
      </Svg>
      <div className="ml-[19px] mb-px flex h-[48px] w-[330px] shrink-0 items-center rounded-full border border-t-2 border-[#5a4f4f] bg-[#463b3b] pr-[8px]">
        <Svg w={22} h={23} className="ml-[17px]"><circle cx="9.500" cy="9.500" r="8" stroke="#fff" strokeWidth="2" /><path d="M15 15.500l6 7" stroke="#ddd" strokeWidth="2.500" /></Svg>
        <Label w={62} className="ml-[16px] text-[18.500px] text-[#d2cccc]">Search</Label>
        <Sunflowers />
      </div>
      <div className="w-[3px]" />
      <TaskItem>
        <Svg w={36} h={34}><path d="M9 1q0-1 1-1h25q1 0 1 1v23H9z" fill="#f2f2f2" /><path d="M0 10q0-1 1-1h26v25H1q-1 0-1-1z" fill="#7d7d7d" opacity="0.850" /><path d="M9 9h18v15H9z" fill="#c6c6c6" /></Svg>
      </TaskItem>
      <TaskItem><EdgeIcon s={36} id="he" /></TaskItem>
      <TaskItem ind><FolderIcon s={36} /></TaskItem>
      <TaskItem><StoreIcon s={36} /></TaskItem>
      <TaskItem><OutlookIcon s={37} /></TaskItem>
      <TaskItem ind><ChromeIcon s={36} /></TaskItem>
      <TaskItem>
        <Svg w={36} h={36}>
          <defs>
            <linearGradient id="mp" x1="0" y1="0" x2="1" y2="1"><stop offset="0" stopColor="#ff9a3a" /><stop offset="0.600" stopColor="#b97ab0" /><stop offset="1" stopColor="#6f6ae0" /></linearGradient>
          </defs>
          <circle cx="18" cy="18" r="16.800" fill="#3a3a3a" stroke="url(#mp)" strokeWidth="2.400" /><path d="M13.500 10.500q0-1.500 1.500-.8l10.500 7.500q1 .8 0 1.600L15 26.300q-1.500.7-1.500-.8z" fill="#f2f2f2" />
        </Svg>
      </TaskItem>
      <TaskItem ind>
        <Svg w={35} h={36}>
          <defs><linearGradient id="op" x1="0" y1="0" x2="0" y2="1"><stop offset="0" stopColor="#ff1f35" /><stop offset="1" stopColor="#a50410" /></linearGradient></defs>
          <path fillRule="evenodd" d="M17.500.5C7.500.5.5 8.300.5 18s7 17.500 17 17.500 17-7.800 17-17.500-7-17.500-17-17.500zM17.500 4.500c4.800 0 7.500 6 7.500 13.500s-2.700 13.500-7.500 13.500S10 25.500 10 18s2.700-13.500 7.500-13.500z" fill="url(#op)" />
          <path d="M17.500 4.500q3-2 6-2.500c6.500 2.500 11 8.500 11 16s-4.500 13.500-11 16q-3-.5-6-2.500c4.800 0 7.500-6 7.500-13.500S22.300 4.500 17.500 4.500z" fill="#f0404a" />
        </Svg>
      </TaskItem>
      <TaskItem ind active><VmwareIcon s={36} /></TaskItem>
      <TaskItem ind badge={<div className="absolute top-[9px] left-[35px] flex h-[24px] w-[24px] items-center justify-center rounded-full bg-[#4cc2ff] text-[16px] text-black">1</div>}>
        <Svg w={36} h={36}>
          <path d="M2 34l2.500-8.500A15.800 15.800 0 1 1 10.500 31.500z" stroke="#22d162" strokeWidth="3.400" />
          <path d="M11 9.500c1-1 2.500-.8 3 .3l1.300 3c.3.700-.8 2-1.300 2.700 1.500 3 3.500 4.700 6.500 6 .8-.7 1.700-2.200 2.600-1.900l3.400 1.600c1 .5.5 2-.2 3-1.500 2.200-4.300 2.500-7 1.600-5-1.700-9-5.500-10.300-10.300-.6-2.500.4-4.500 2-6z" fill="#22d162" />
        </Svg>
      </TaskItem>
      <TaskItem ind>
        <Svg w={36} h={34}>
          <path d="M8 2q0-2 2-2h24q2 0 2 2v7H8z" fill="#3f9de8" /><path d="M8 9h28v8H8z" fill="#2b7cd3" /><path d="M8 17h28v8H8z" fill="#185abd" /><path d="M8 25h28v7q0 2-2 2H10q-2 0-2-2z" fill="#103f91" />
          <rect x="0" y="8" width="18" height="19" rx="2" fill="#1a56b4" />
          <path d="M3.500 13l2.500 9 3-8.500 3 8.500 2.500-9" stroke="#fff" strokeWidth="1.900" />
        </Svg>
      </TaskItem>
      <div className="relative ml-[204px] h-[36px] w-[36px] shrink-0">
        <Svg w={36} h={36}>
          <path d="M14 0q3 9-4 14-4 4-10 3 2 4 6 6l16-4V8z" fill="#f0921e" />
          <path d="M8 36a8 8 0 0 1-1-15q1-8 9-8t10 6q10 0 10 8.500T28 36z" fill="#a9cbf3" /><path d="M8 36a8 8 0 0 1-7-5q10 2 34 0-2 5-7 5z" fill="#86aee4" />
        </Svg>
        <div className="absolute -top-[5px] left-[17px] flex h-[24px] w-[24px] items-center justify-center rounded-full bg-[#ff99a4] text-[16px] text-black">2</div>
      </div>
      <Svg w={16} h={9} className="ml-[49px]"><path d="M1 8l7-7 7 7" stroke="#fff" strokeWidth="2" /></Svg>
      <Svg w={24} h={23} className="ml-[28px]">
        <path d="M7 1q0-1 1-1h15q1 0 1 1v21q0 1-1 1H8q-1 0-1-1z" fill="#ca64ea" /><path d="M18 6h6v6h-6z" fill="#ae4bd5" /><path d="M18 12h6v5h-6z" fill="#9332bf" /><path d="M7 17h17v6H7z" fill="#7719aa" />
        <rect x="0" y="5" width="14" height="14" rx="1" fill="#7719aa" /><path d="M4.500 15.500v-7l5 7v-7" stroke="#fff" strokeWidth="1.600" />
      </Svg>
      <Svg w={25} h={16} className="ml-[24px]">
        <path d="M6 8Q5 0 13 0q7 0 8 7z" fill="#8e8e8e" /><path d="M5 16q-5-1-5-5.500Q1 6 6 6l10 5 2 5z" fill="#d8d8d8" /><path d="M5 16l12-8q7-1 8 4-.5 4-4 4z" fill="#f4f4f4" />
      </Svg>
      <div className="ml-[27px] flex w-[35px] shrink-0 flex-col items-center text-[16.500px] leading-[23px]"><Label w={35}>ENG</Label><Label w={22}>US</Label></div>
      <Svg w={25} h={19} className="ml-[27px]">
        <path d="M1 8Q12.500-4 24 8M5 12q7.500-8 15 0M8.500 15.500q4-4 8 0" stroke="#fff" strokeWidth="2" /><circle cx="12.500" cy="16.500" r="2" fill="#fff" />
      </Svg>
      <Svg w={24} h={20} className="ml-[11px]">
        <path d="M1 7h4l5-5v16l-5-5H1z" stroke="#fff" strokeWidth="1.700" strokeLinejoin="round" /><path d="M13 7q2 3 0 6M16 4.500q4 5.500 0 11" stroke="#fff" strokeWidth="1.700" /><path d="M19 2q5.500 8 0 16" stroke="#777" strokeWidth="1.700" />
      </Svg>
      <Svg w={25} h={20} className="mt-[-4px] ml-[12px]">
        <path d="M9 5h10q3 0 3 3v8q0 3-3 3H5q-3 0-3-3v-4" stroke="#fff" strokeWidth="1.900" /><path d="M6.500 9l3-1H19v8H5v-4z" fill="#fff" /><path d="M23 9h2v5h-2zM5 0L0 7h3l-1 5 6-7H5z" fill="#fff" />
      </Svg>
      <div className="mb-[2px] ml-[24px] flex w-[93px] shrink-0 flex-col items-end text-[16.500px] leading-[24px]"><Label w={75}>10:36 PM</Label><Label w={93}>2025-03-30</Label></div>
      <Svg w={21} h={23} className="mt-[-2px] ml-[13px]">
        <path d="M10.500 1q7 0 7 7v6l2.500 4H1l2.500-4V8q0-7 7-7z" stroke="#fff" strokeWidth="1.700" strokeLinejoin="round" /><path d="M7.500 19q3 5 6 0" stroke="#fff" strokeWidth="1.700" />
      </Svg>
    </div>
  );
}

export default function App() {
  return (
    <div className="flex h-[1200px] w-[1920px] flex-col overflow-hidden bg-[#282828] font-['Open_Sans','Noto_Sans',sans-serif]">
      <TitleBar />
      <MenuBar />
      <div className="flex h-[1009px] shrink-0">
        <Library />
        <div className="flex w-[1720px] flex-col border-t-2 border-r-[3px] border-b-[3px] border-l-2 border-[#f4f4f4] bg-[#808080] pt-px pl-px">
          <VmTabs />
          <FirefoxTabs />
          <FirefoxToolbar />
          <Bookmarks />
          <Page />
          <GuestTaskbar />
        </div>
      </div>
      <StatusBar />
      <HostTaskbar />
    </div>
  );
}
